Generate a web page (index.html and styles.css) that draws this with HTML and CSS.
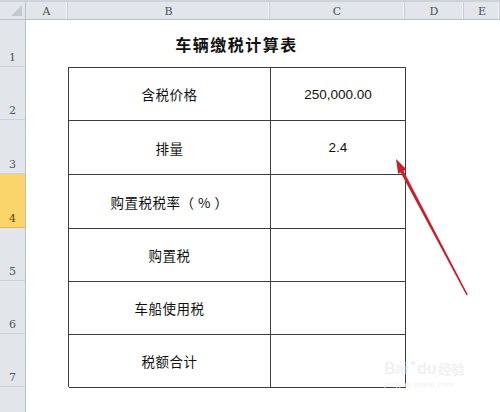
FILE: index.html
```html
<!DOCTYPE html>
<html lang="zh">
<head>
<meta charset="utf-8">
<link rel="stylesheet" href="styles.css">
</head>
<body>
<div class="sheet">
  <div class="corner"><span class="tri"></span></div>
  <div class="colh">A</div>
  <div class="colh">B</div>
  <div class="colh">C</div>
  <div class="colh">D</div>
  <div class="colh last">E</div>

  <div class="rowh r1">1</div>
  <div class="rowh r2">2</div>
  <div class="rowh r3">3</div>
  <div class="rowh r4 sel">4</div>
  <div class="rowh r5">5</div>
  <div class="rowh r6">6</div>
  <div class="rowh r7">7</div>
  <div class="rowh r8"></div>

  <div class="title">车辆缴税计算表</div>

  <div class="tbl">
    <div class="cell lab">含税价格</div><div class="cell num">250,000.00</div>
    <div class="cell lab">排量</div><div class="cell num">2.4</div>
    <div class="cell lab">购置税税率（ % ）</div><div class="cell num"></div>
    <div class="cell lab">购置税</div><div class="cell num"></div>
    <div class="cell lab">车船使用税</div><div class="cell num"></div>
    <div class="cell lab">税额合计</div><div class="cell num"></div>
  </div>

  <svg class="arrow" width="500" height="412" viewBox="0 0 500 412">
    <polygon fill="#cc1d2a" points="396,159 406.3,169.2 403.6,170.9 467.8,294.4 466.6,295.4 400.6,172.4 398.1,173.8"/>
  </svg>

  <div class="wm">
    <div class="wm-top"><span>Bai</span><span class="paw">&#9679;</span><span>du</span><span class="wm-cn">经验</span></div>
    <div class="wm-url">jingyan.baidu.com</div>
  </div>
</div>
</body>
</html>
```

FILE: styles.css
```css
html, body {
  margin: 0;
  padding: 0;
  background: #ffffff;
}

.sheet {
  position: relative;
  width: 500px;
  height: 412px;
  overflow: hidden;
  display: grid;
  grid-template-columns: 26px 42px 202px 135px 59px 36px;
  grid-template-rows: 20px 47px 53px 54px 54px 53px 53px 53px 25px;
  font-family: "Noto Sans CJK SC", "Liberation Sans", sans-serif;
  background: #ffffff;
}

.corner {
  position: relative;
  background: #e2e6eb;
  border-top: 2px solid #cdd3db;
  border-bottom: 1px solid #b9c0ca;
  border-right: 1px solid #b9c0ca;
  box-sizing: border-box;
}

.tri {
  position: absolute;
  right: 3px;
  bottom: 3px;
  width: 0;
  height: 0;
  border-left: 11px solid transparent;
  border-bottom: 11px solid #c3c9d1;
}

.colh {
  background: #e2e6eb;
  border-top: 2px solid #cdd3db;
  border-bottom: 1px solid #b9c0ca;
  border-right: 1px solid #c7cdd5;
  box-shadow: inset -1px 0 0 #f4f6f8;
  box-sizing: border-box;
  font-family: "DejaVu Serif", "Liberation Serif", serif;
  font-size: 11px;
  color: #4a4f58;
  display: flex;
  align-items: center;
  justify-content: center;
  padding-top: 1px;
}

.colh.last {
  justify-content: flex-start;
  padding-left: 14px;
}

.rowh {
  grid-column: 1;
  background: #e2e6eb;
  border-right: 1px solid #b9c0ca;
  border-bottom: 1px solid #cbd1d8;
  box-sizing: border-box;
  font-family: "DejaVu Serif", "Liberation Serif", serif;
  font-size: 11px;
  color: #4f5560;
  display: flex;
  align-items: flex-end;
  justify-content: center;
  padding-bottom: 2px;
}

.rowh.sel {
  background: #f9d56b;
  color: #5a4a1c;
  border-bottom-color: #e2b94a;
}

.r1 { grid-row: 2; }
.r2 { grid-row: 3; }
.r3 { grid-row: 4; }
.r4 { grid-row: 5; }
.r5 { grid-row: 6; }
.r6 { grid-row: 7; }
.r7 { grid-row: 8; }
.r8 { grid-row: 9; border-bottom: none; }

.title {
  grid-column: 3 / 5;
  grid-row: 2;
  display: flex;
  align-items: center;
  justify-content: center;
  font-size: 16px;
  font-weight: bold;
  letter-spacing: 1.5px;
  color: #111;
  padding-top: 1px;
}

.tbl {
  grid-column: 3 / 5;
  grid-row: 3 / 9;
  display: grid;
  grid-template-columns: 202px 135px;
  grid-template-rows: 53px 54px 54px 53px 53px 53px;
  border-left: 1px solid #3c3c3c;
  border-top: 1px solid #3c3c3c;
  width: 338px;
  box-sizing: border-box;
}

.cell {
  border-right: 1px solid #3c3c3c;
  border-bottom: 1px solid #3c3c3c;
  display: flex;
  align-items: center;
  justify-content: center;
  color: #111;
  white-space: pre;
}

.lab {
  font-size: 13.5px;
  letter-spacing: 0.5px;
}

.num {
  font-family: "Liberation Sans", Arial, sans-serif;
  font-size: 13.5px;
}

.arrow {
  position: absolute;
  left: 0;
  top: 0;
  pointer-events: none;
}

.wm {
  position: absolute;
  left: 384px;
  top: 358px;
  color: #f1f1f1;
  font-family: "Liberation Sans", sans-serif;
}

.wm-top {
  display: flex;
  align-items: flex-end;
  font-size: 16px;
  font-weight: bold;
  line-height: 18px;
}

.paw {
  font-size: 10px;
  line-height: 10px;
  margin: 0 1px 10px;
}

.wm-cn {
  font-family: "Noto Sans CJK SC", sans-serif;
  font-size: 13px;
  margin-left: 2px;
}

.wm-url {
  font-size: 8px;
  margin-top: 2px;
  letter-spacing: 0.3px;
}
```
